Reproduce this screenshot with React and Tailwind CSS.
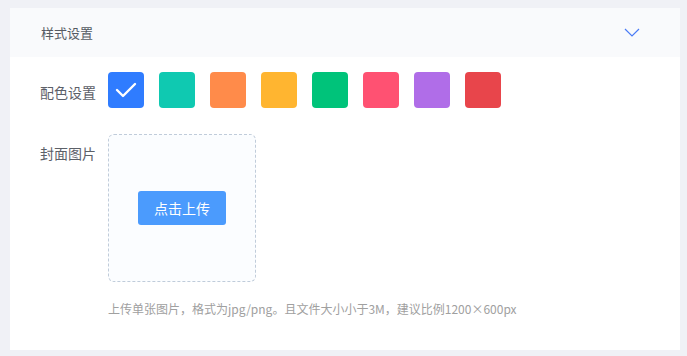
const colors = ['#2f7cff', '#0fc9b1', '#ff8b4a', '#ffb530', '#00c37a', '#ff5172', '#b06de8', '#e8454b'];

export default function App() {
    const font = { fontFamily: '"Noto Sans CJK SC", "Noto Sans", sans-serif' };

    return (
        <div className="w-[687px] h-[356px] bg-[#f0f1f6] pt-2 pl-[10px] pr-[7px]" style={font}>
            <div className="bg-white h-[342px]">
                {/* Header */}
                <div className="h-[49px] bg-[#f9fafc] flex items-center justify-between pl-[31px] pr-[40px]">
                    <span className="text-[13px] text-[#555a63]">样式设置</span>
                    <svg width="16" height="9" viewBox="0 0 16 9" fill="none">
                        <path d="M1 1 L8 8 L15 1" stroke="#4a7bf6" strokeWidth="1.2" />
                    </svg>
                </div>

                <div className="pl-[30px] pt-[15px]">
                    {/* Colour row */}
                    <div className="flex items-start">
                        <div className="w-[68px] text-sm leading-[40px] text-[#5c6068]">配色设置</div>
                        <div className="flex gap-[15px]">
                            {colors.map((c, i) => (
                                <div
                                    key={c}
                                    className="w-9 h-9 rounded-[4px] flex items-center justify-center"
                                    style={{ backgroundColor: c }}
                                >
                                    {i === 0 && (
                                        <svg width="22" height="16" viewBox="0 0 22 16" fill="none">
                                            <path d="M2 8 L8 14 L20 2" stroke="#fff" strokeWidth="2.4" strokeLinecap="round" strokeLinejoin="round" />
                                        </svg>
                                    )}
                                </div>
                            ))}
                        </div>
                    </div>

                    {/* Cover image */}
                    <div className="flex items-start mt-[22px]">
                        <div className="w-[68px] text-sm leading-[38px] text-[#5c6068]">封面图片</div>
                        <div>
                            <div className="w-[148px] h-[148px] rounded-md border border-dashed border-[#c0ccda] bg-[#fbfdff] flex items-center justify-center">
                                <button className="w-[88px] h-[34px] rounded-[3px] bg-[#4b9bfd] text-white text-sm">
                                    点击上传
                                </button>
                            </div>
                            <div className="mt-[18px] text-xs leading-[18px] text-[#a0a0a0]">
                                上传单张图片，格式为jpg/png。且文件大小小于3M，建议比例1200×600px
                            </div>
                        </div>
                    </div>
                </div>
            </div>
        </div>
    );
}
